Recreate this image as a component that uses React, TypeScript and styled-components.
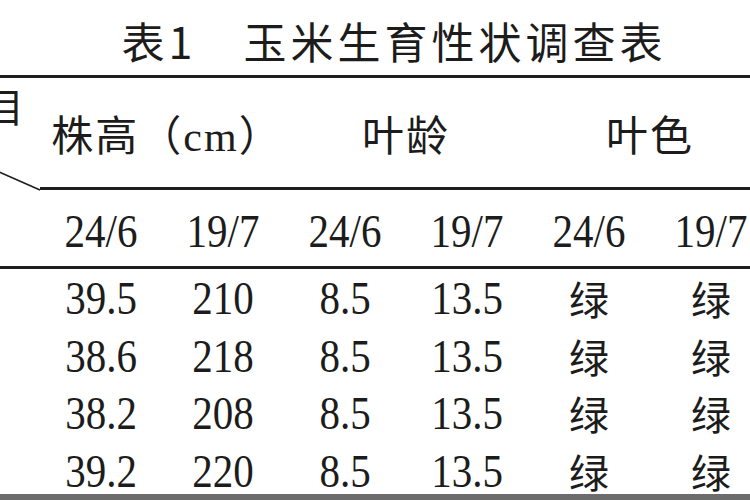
import React from "react";
import styled, { createGlobalStyle } from "styled-components";

const Global = createGlobalStyle`
  html, body { margin: 0; padding: 0; background: #fff; }
  body { overflow: hidden; }
`;

const Page = styled.div`
  width: 750px;
  height: 500px;
  overflow: hidden;
  background: #fff;
  color: #1c1c1c;
  display: flex;
  flex-direction: column;
`;

const Title = styled.h1`
  margin: 0;
  height: 75px;
  box-sizing: border-box;
  padding: 6px 0 0 38px;
  display: flex;
  align-items: center;
  justify-content: center;
  font-family: "Noto Sans CJK SC", sans-serif;
  font-weight: 400;
  font-size: 43px;
  letter-spacing: 4px;
  line-height: 1;
  white-space: pre;
  flex-shrink: 0;
`;

const Table = styled.div`
  display: grid;
  width: max-content;
  grid-template-columns: 200px repeat(6, 122px);
  grid-template-rows: 112px 79px 57.5px 57.5px 57.5px 52px;
  margin-left: -160px;
  border-top: 3px solid #1e1e1e;
  border-bottom: 7px solid #6c6c6c;
  font-family: "Liberation Serif", "Noto Sans CJK SC", serif;
  font-size: 41px;
  flex-shrink: 0;
`;

const Stub = styled.div`
  grid-row: 1 / span 2;
  grid-column: 1;
  position: relative;
  border-bottom: 3px solid #1e1e1e;
`;

const StubLabel = styled.span`
  position: absolute;
  top: 7px;
  right: 16px;
  font-family: "Noto Sans CJK SC", sans-serif;
  font-size: 40px;
  line-height: 40px;
`;

const Diagonal = styled.svg`
  position: absolute;
  left: 0;
  top: 0;
  width: 200px;
  height: 112px;
  overflow: visible;
`;

const GroupHead = styled.div<{ $shift?: number }>`
  grid-column: span 2;
  border-bottom: 3px solid #1e1e1e;
  display: flex;
  align-items: center;
  justify-content: center;
  padding-left: ${(p) => (p.$shift ? `${p.$shift}px` : "0")};
  font-size: 42px;
  letter-spacing: 2px;
  white-space: pre;
`;

const DateCell = styled.div`
  border-bottom: 3px solid #1e1e1e;
  display: flex;
  align-items: center;
  justify-content: center;
  padding-top: 6px;
`;

const StubCell = styled.div``;

const DataCell = styled.div`
  display: flex;
  justify-content: center;
  align-items: flex-start;
  padding-top: 6px;
  line-height: 46px;
`;

const Num = styled.span`
  display: inline-block;
  transform: scaleY(1.14);
`;

const Han = styled.span`
  display: inline-block;
  font-family: "Noto Sans CJK SC", sans-serif;
  font-size: 40px;
`;

const dates = ["24/6", "19/7", "24/6", "19/7", "24/6", "19/7"];

const rows = [
  ["39.5", "210", "8.5", "13.5", "绿", "绿"],
  ["38.6", "218", "8.5", "13.5", "绿", "绿"],
  ["38.2", "208", "8.5", "13.5", "绿", "绿"],
  ["39.2", "220", "8.5", "13.5", "绿", "绿"],
];

export default function App() {
  return (
    <Page>
      <Global />
      <Title>{"表1\u3000玉米生育性状调查表"}</Title>
      <Table>
        <Stub>
          <StubLabel>项目</StubLabel>
          <Diagonal viewBox="0 0 200 112">
            <line x1="0" y1="24" x2="200" y2="112" stroke="#1e1e1e" strokeWidth="1.6" />
          </Diagonal>
        </Stub>
        <GroupHead $shift={10}>株高（cm）</GroupHead>
        <GroupHead>叶龄</GroupHead>
        <GroupHead>叶色</GroupHead>
        {dates.map((d, i) => (
          <DateCell key={i}>
            <Num>{d}</Num>
          </DateCell>
        ))}
        {rows.map((r, ri) => (
          <React.Fragment key={ri}>
            <StubCell />
            {r.map((v, ci) => (
              <DataCell key={ci}>
                {v === "绿" ? <Han>{v}</Han> : <Num>{v}</Num>}
              </DataCell>
            ))}
          </React.Fragment>
        ))}
      </Table>
    </Page>
  );
}
